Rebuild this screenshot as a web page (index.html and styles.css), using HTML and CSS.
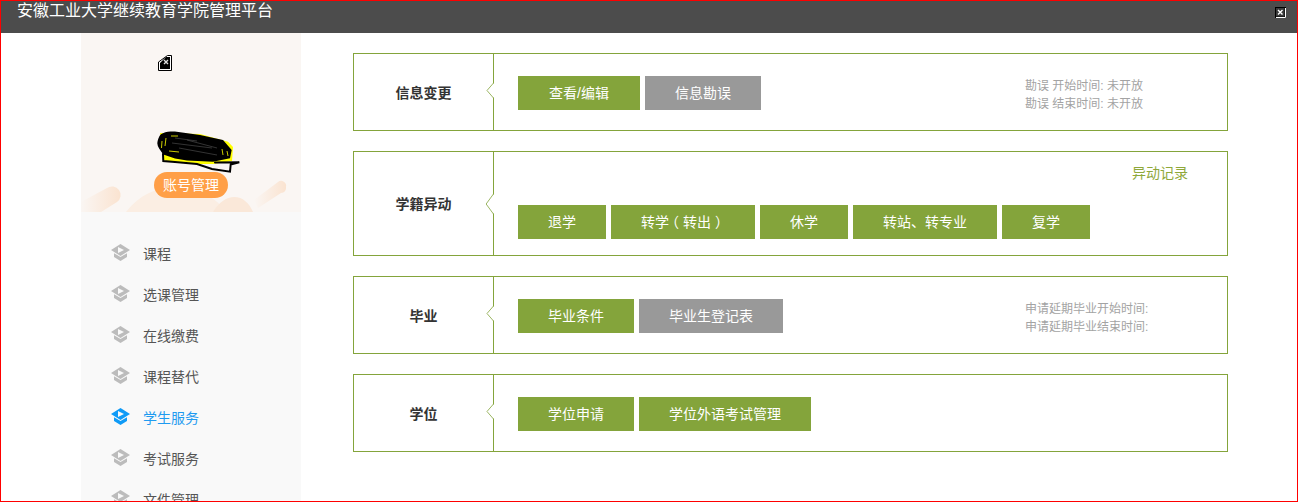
FILE: index.html
```html
<!DOCTYPE html>
<html lang="zh-CN">
<head>
<meta charset="utf-8">
<title>安徽工业大学继续教育学院管理平台</title>
<link rel="stylesheet" href="styles.css">
</head>
<body>
<svg class="defs" width="0" height="0" aria-hidden="true">
  <symbol id="cap" viewBox="0 0 19 17">
    <path fill="currentColor" fill-rule="evenodd" d="M9.500 0 19 6 9.500 12 0 6ZM7 3v6l6-3Z"/>
    <path fill="currentColor" d="M3 9.200 9.500 13 16 9.200V13L9.500 17 3 13Z"/>
  </symbol>
  <symbol id="chev" viewBox="0 0 8 16" preserveAspectRatio="none">
    <path fill="#fff" d="M8 0 1 8l7 8Z"/>
    <path fill="none" stroke="#9cb663" stroke-width="1" d="M7.500 0 1 8l6.500 8" vector-effect="non-scaling-stroke"/>
  </symbol>
</svg>
<div class="frame">
  <header class="topbar">
    <h1 class="brand">安徽工业大学继续教育学院管理平台</h1>
    <svg class="close-icon" viewBox="0 0 11 11" aria-hidden="true">
      <rect width="11" height="11" fill="#000"/>
      <path d="M1 10.500h9.500V1" fill="none" stroke="#fff"/>
      <rect x="1" y="1" width="8.500" height="8.500" fill="#3a3a3a"/>
      <path d="M3 3l4.500 4.500m0-4.500L3 7.500" stroke="#fff" stroke-width="1.400"/>
    </svg>
  </header>
  <div class="layout">
    <aside class="sidebar">
      <section class="profile">
        <svg class="decor" viewBox="0 0 220 45" aria-hidden="true">
          <defs>
            <linearGradient id="fadeA" x1="0" x2="1"><stop offset="0" stop-color="#faf6f3"/><stop offset="1" stop-color="#fae3d0"/></linearGradient>
          </defs>
          <path fill="url(#fadeA)" d="M0 35 26 21a8 8 0 0 1 10 14L20 45H0Z"/>
          <path fill="url(#fadeA)" d="M173 33 197 15a5 5 0 0 1 8 5 5 5 0 0 1-5 6L177 41Z"/>
          <path fill="#fbeee3" d="M45 45C58 28 76 20 93 20c22 0 42 10 52 25Z"/>
          <path fill="#fae8d9" d="M132 45c6-10 14-15 21-15 9 0 15 6 19 15Z"/>
        </svg>
        <svg class="broken-img" viewBox="0 0 14 16" aria-hidden="true">
          <path fill="#fff" stroke="#000" d="M.5 15.500V7L9.500 .5h4v15Z"/>
          <path fill="#000" d="M2 14V8L8 2h4v12Z"/>
          <path d="M6 5l4 4m0-4L6 9" stroke="#ddd" stroke-width="1.400"/>
        </svg>
        <svg class="scribble" viewBox="0 0 84 44" aria-hidden="true">
          <path fill="#ff0" d="M3 2 43 3 71 10.700 76 16 75 30 56 33 40 33 6.300 29.500 6 24Z"/>
          <path fill="#000" d="M.3 12.300C1 7 3 3 6 2.300 10 .5 15 .5 19.700 .7L43 4 66 9 74.700 19 73 27.300 56 30.700 30 29.500 18 27.500 6.300 23.500C3 19 .5 16 .3 12.300Z"/>
          <path fill="none" stroke="#000" stroke-width="2" stroke-linecap="round" d="M6 23 6.300 30 18 31 40 33 55 38 73 40.700 73.700 33.500 82.300 31.300 58 31.500"/>
          <path fill="none" stroke="#ff0" stroke-width=".8" d="M5 10 4.500 17M9 7 8 15M14 5h7M12 20l10 1M70 20l1 5M65 18l1 6"/>
          <path fill="none" stroke="#555" stroke-width=".6" d="M15 12l40 5M22 17l38 7M30 9l30 8M18 7l22 3"/>
        </svg>
        <a class="account-btn">账号管理</a>
      </section>
      <nav class="menu">
        <a class="menu-item"><svg class="cap"><use href="#cap"/></svg>课程</a>
        <a class="menu-item"><svg class="cap"><use href="#cap"/></svg>选课管理</a>
        <a class="menu-item"><svg class="cap"><use href="#cap"/></svg>在线缴费</a>
        <a class="menu-item"><svg class="cap"><use href="#cap"/></svg>课程替代</a>
        <a class="menu-item is-active"><svg class="cap"><use href="#cap"/></svg>学生服务</a>
        <a class="menu-item"><svg class="cap"><use href="#cap"/></svg>考试服务</a>
        <a class="menu-item"><svg class="cap"><use href="#cap"/></svg>文件管理</a>
      </nav>
    </aside>
    <main class="content">
      <section class="card">
        <h2 class="card-title">信息变更</h2>
        <div class="card-body">
          <svg class="chev"><use href="#chev"/></svg>
          <div class="btn-row">
            <a class="btn w122">查看/编辑</a>
            <a class="btn is-off w116">信息勘误</a>
          </div>
          <div class="note"><p>勘误 开始时间: 未开放</p><p>勘误 结束时间: 未开放</p></div>
        </div>
      </section>
      <section class="card card-tall">
        <h2 class="card-title">学籍异动</h2>
        <div class="card-body card-body-stack">
          <svg class="chev chev-tall"><use href="#chev"/></svg>
          <a class="record-link">异动记录</a>
          <div class="btn-row">
            <a class="btn w88">退学</a>
            <a class="btn w144">转学<span class="paren-open">（</span>转出<span class="paren-close">）</span></a>
            <a class="btn w88">休学</a>
            <a class="btn w144">转站、转专业</a>
            <a class="btn w88">复学</a>
          </div>
        </div>
      </section>
      <section class="card">
        <h2 class="card-title">毕业</h2>
        <div class="card-body">
          <svg class="chev"><use href="#chev"/></svg>
          <div class="btn-row">
            <a class="btn w116">毕业条件</a>
            <a class="btn is-off w144">毕业生登记表</a>
          </div>
          <div class="note"><p>申请延期毕业开始时间:</p><p>申请延期毕业结束时间:</p></div>
        </div>
      </section>
      <section class="card">
        <h2 class="card-title">学位</h2>
        <div class="card-body">
          <svg class="chev"><use href="#chev"/></svg>
          <div class="btn-row">
            <a class="btn w116">学位申请</a>
            <a class="btn w172">学位外语考试管理</a>
          </div>
        </div>
      </section>
    </main>
  </div>
</div>
</body>
</html>
```
FILE: styles.css
```css
* { box-sizing: border-box; }
html, body { margin: 0; height: 100%; }
body {
  font-family: "Liberation Sans", "Noto Sans CJK SC", sans-serif;
  font-size: 14px;
  color: #333;
  background: #fff;
}
p, h1, h2 { margin: 0; }
.defs { position: absolute; }
.frame {
  height: 502px;
  border: 1px solid #f00;
  overflow: hidden;
}
.topbar {
  height: 32px;
  background: #4c4c4c;
  display: flex;
  justify-content: space-between;
  padding: 0 11px 0 16px;
}
.brand {
  font-size: 16px;
  font-weight: 400;
  line-height: 20px;
  color: #fff;
}
.close-icon { width: 11px; height: 11px; margin-top: 6px; }
.layout { display: flex; padding-left: 80px; }
.sidebar { width: 220px; flex: none; background: #f9f9f9; }
.profile {
  position: relative;
  height: 179px;
  background: #faf6f3;
  display: flex;
  flex-direction: column;
  align-items: center;
}
.decor { position: absolute; left: 0; bottom: 0; width: 220px; height: 45px; }
.broken-img { width: 14px; height: 16px; margin: 22px 0 0 -52px; position: relative; }
.scribble { width: 84px; height: 44px; margin: 60px 0 0 16px; position: relative; }
.account-btn {
  position: relative;
  margin-top: -3px;
  width: 74px;
  height: 26px;
  border-radius: 13px;
  background: #ff9f47;
  color: #fff;
  text-align: center;
  line-height: 26px;
  font-size: 14px;
}
.menu { padding-top: 20px; height: 400px; }
.menu-item {
  display: flex;
  align-items: center;
  height: 41px;
  padding-left: 30px;
  color: #555;
  font-size: 14px;
}
.cap { width: 19px; height: 17px; margin-right: 13px; color: #bcbcbc; }
.is-active { color: #1f9bf0; }
.is-active .cap { color: #0f9bf7; }
.content {
  margin-left: 52px;
  padding-top: 20px;
  width: 875px;
  display: flex;
  flex-direction: column;
  gap: 20px;
}
.card {
  display: flex;
  height: 78px;
  border: 1px solid #84a43b;
  flex: none;
}
.card-tall { height: 105px; }
.card-title {
  width: 139px;
  flex: none;
  text-align: center;
  font-size: 14px;
  font-weight: 700;
  color: #333;
  align-self: center;
}
.card-tall .card-title { margin-top: -2px; }
.card-body {
  position: relative;
  flex: 1;
  border-left: 1px solid #84a43b;
  display: flex;
  justify-content: space-between;
  align-items: center;
  padding: 2px 0 0 24px;
}
.card-body-stack {
  display: block;
  padding-top: 53px;
}
.chev {
  position: absolute;
  left: -8px;
  top: 50%;
  width: 8px;
  height: 15px;
  margin-top: -9px;
}
.chev-tall { height: 20px; margin-top: -10px; left: -9px; width: 9px; }
.btn-row { display: flex; gap: 5px; }
.btn {
  height: 34px;
  background: #84a43b;
  color: #fff;
  line-height: 34px;
  text-align: center;
  font-size: 14px;
}
.btn.is-off { background: #999; }
.paren-open { margin: 0 4px 0 -4px; }
.paren-close { margin: 0 -4px 0 4px; }
.w88 { width: 88px; }
.w116 { width: 116px; }
.w122 { width: 122px; }
.w144 { width: 144px; }
.w172 { width: 172px; }
.note {
  width: 202px;
  margin-top: 4px;
  color: #a3a3a3;
  font-size: 12px;
  line-height: 18px;
}
.record-link {
  position: absolute;
  top: 11px;
  right: 39px;
  color: #8fa83a;
  font-size: 14px;
  line-height: 20px;
}
```
